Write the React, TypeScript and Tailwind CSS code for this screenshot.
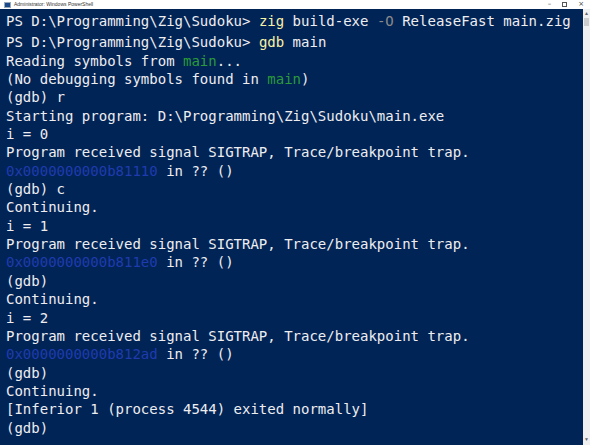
import React from "react";

type Seg = { t: string; c?: string };

const W = "text-[#eeedf0]";
const Y = "text-[#f9f1a5]";
const G = "text-[#2a9a3a]";
const GR = "text-[#8a8a8a]";
const B = "text-[#1f3bb0]";

const lines: Seg[][] = [
  [{ t: "PS D:\\Programming\\Zig\\Sudoku> " }, { t: "zig", c: Y }, { t: " build-exe " }, { t: "-O", c: GR }, { t: " ReleaseFast main.zig" }],
  [{ t: "PS D:\\Programming\\Zig\\Sudoku> " }, { t: "gdb", c: Y }, { t: " main" }],
  [{ t: "Reading symbols from " }, { t: "main", c: G }, { t: "..." }],
  [{ t: "(No debugging symbols found in " }, { t: "main", c: G }, { t: ")" }],
  [{ t: "(gdb) r" }],
  [{ t: "Starting program: D:\\Programming\\Zig\\Sudoku\\main.exe" }],
  [{ t: "i = 0" }],
  [{ t: "Program received signal SIGTRAP, Trace/breakpoint trap." }],
  [{ t: "0x0000000000b81110", c: B }, { t: " in ?? ()" }],
  [{ t: "(gdb) c" }],
  [{ t: "Continuing." }],
  [{ t: "i = 1" }],
  [{ t: "Program received signal SIGTRAP, Trace/breakpoint trap." }],
  [{ t: "0x0000000000b811e0", c: B }, { t: " in ?? ()" }],
  [{ t: "(gdb)" }],
  [{ t: "Continuing." }],
  [{ t: "i = 2" }],
  [{ t: "Program received signal SIGTRAP, Trace/breakpoint trap." }],
  [{ t: "0x0000000000b812ad", c: B }, { t: " in ?? ()" }],
  [{ t: "(gdb)" }],
  [{ t: "Continuing." }],
  [{ t: "[Inferior 1 (process 4544) exited normally]" }],
  [{ t: "(gdb)" }],
];

export default function App() {
  return (
    <div className="w-[590px] h-[445px] flex flex-col bg-white overflow-hidden">
      {/* title bar */}
      <div className="h-[9px] flex items-center bg-white relative">
        <div className="ml-[4px] w-[7px] h-[6px] bg-[#1b4a8a] border border-[#9ab]" />
        <span className="ml-[3px] text-[5px] leading-none text-[#333] font-['Liberation_Sans',sans-serif]">
          Administrator: Windows PowerShell
        </span>
        <div className="ml-auto flex items-center gap-[11px] mr-[6px] text-[7px] leading-none text-[#444] font-['DejaVu_Sans',sans-serif]">
          <span>–</span>
          <span className="w-[5px] h-[5px] border border-[#555]" />
          <span>×</span>
        </div>
      </div>
      <div className="flex flex-1 min-h-0">
        {/* console */}
        <div className="flex-1 bg-[#012456] pl-[6px] pt-[3px] font-['DejaVu_Sans_Mono',monospace] text-[14px] leading-[18.35px] whitespace-pre">
          {lines.map((l, i) => (
            <div key={i} className={i === 0 ? "mb-[3px]" : ""}>
              {l.map((s, j) => (
                <span key={j} className={s.c ?? W}>
                  {s.t}
                </span>
              ))}
            </div>
          ))}
        </div>
        {/* scrollbar */}
        <div className="w-[7px] bg-[#f0f0f0] flex flex-col items-center">
          <span className="text-[5px] leading-none text-[#666] mt-[2px]">▲</span>
          <div className="mt-[2px] w-[5px] h-[8px] bg-[#cdcdcd]" />
          <span className="mt-auto mb-[3px] text-[5px] leading-none text-[#666]">▼</span>
        </div>
      </div>
    </div>
  );
}
